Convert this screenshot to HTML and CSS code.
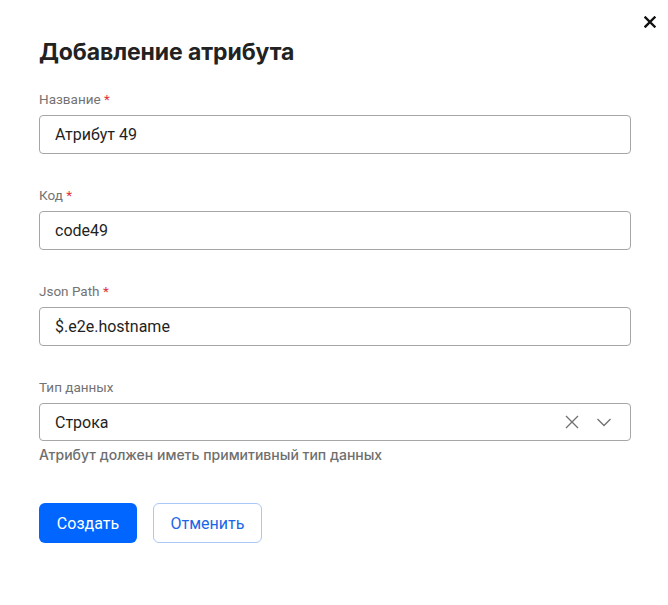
FILE: index.html
```html
<!DOCTYPE html>
<html lang="ru">
<head>
<meta charset="utf-8">
<link rel="stylesheet" href="styles.css">
</head>
<body>
<div class="dialog">
  <button class="close" aria-label="Закрыть">
    <svg width="12" height="12" viewBox="0 0 12 12"><path d="M1.5 1.5L10.5 10.5M10.5 1.5L1.5 10.5" stroke="#111" stroke-width="2.4" stroke-linecap="square"/></svg>
  </button>
  <h1 class="title">Добавление атрибута</h1>
  <form class="form">
    <div class="field">
      <label class="label">Название <span class="req">*</span></label>
      <div class="input">Атрибут 49</div>
    </div>
    <div class="field">
      <label class="label">Код <span class="req">*</span></label>
      <div class="input">code49</div>
    </div>
    <div class="field">
      <label class="label">Json Path <span class="req">*</span></label>
      <div class="input">$.e2e.hostname</div>
    </div>
    <div class="field">
      <label class="label">Тип данных</label>
      <div class="input select">
        <span class="value">Строка</span>
        <span class="icons">
          <svg width="16" height="16" viewBox="0 0 16 16"><path d="M2 2L14 14M14 2L2 14" stroke="#707070" stroke-width="1.3"/></svg>
          <svg width="16" height="16" viewBox="0 0 16 16"><path d="M1.5 5L8 11.5L14.5 5" fill="none" stroke="#707070" stroke-width="1.3"/></svg>
        </span>
      </div>
      <div class="hint">Атрибут должен иметь примитивный тип данных</div>
    </div>
    <div class="actions">
      <button type="button" class="btn primary">Создать</button>
      <button type="button" class="btn secondary">Отменить</button>
    </div>
  </form>
</div>
</body>
</html>
```
FILE: styles.css
```css
* { box-sizing: border-box; }
html, body { margin: 0; padding: 0; background: #fff; }
body { font-family: Roboto, "Liberation Sans", Arial, sans-serif; color: #1f1f1f; }
.dialog { position: relative; width: 668px; height: 605px; padding: 36px 37px 0 39px; }
.close { position: absolute; top: 16px; right: 12px; background: none; border: 0; padding: 0; width: 12px; height: 12px; display: flex; }
.title { margin: 0; font-family: Inter, Roboto, sans-serif; font-size: 23px; line-height: 32px; font-weight: 700; color: #222; letter-spacing: -0.1px; }
.form { display: flex; flex-direction: column; gap: 33px; margin-top: 23px; }
.field { display: flex; flex-direction: column; gap: 8px; }
.label { font-size: 13.5px; line-height: 16px; color: #737373; }
.req { color: #e0313a; }
.input { height: 39px; border: 1px solid #a6a6a6; border-radius: 4px; padding: 0 15px; display: flex; align-items: center; font-size: 16px; color: #1f1f1f; }
.select { height: 38px; justify-content: space-between; padding-right: 18px; }
.icons { display: flex; gap: 16px; align-items: center; }
.icons svg { display: block; }
.hint { margin-top: -2px; font-family: Inter, Roboto, sans-serif; font-size: 14px; line-height: 16px; color: #6e6e6e; font-weight: 500; }
.actions { display: flex; gap: 16px; margin-top: 7px; }
.btn { height: 40px; border-radius: 6px; font-family: inherit; font-size: 16px; padding: 0; cursor: pointer; }
.primary { width: 98px; background: #0066ff; color: #fff; border: 0; }
.secondary { width: 109px; background: #fff; color: #1a66e6; border: 1px solid #a9c8f7; }
```
